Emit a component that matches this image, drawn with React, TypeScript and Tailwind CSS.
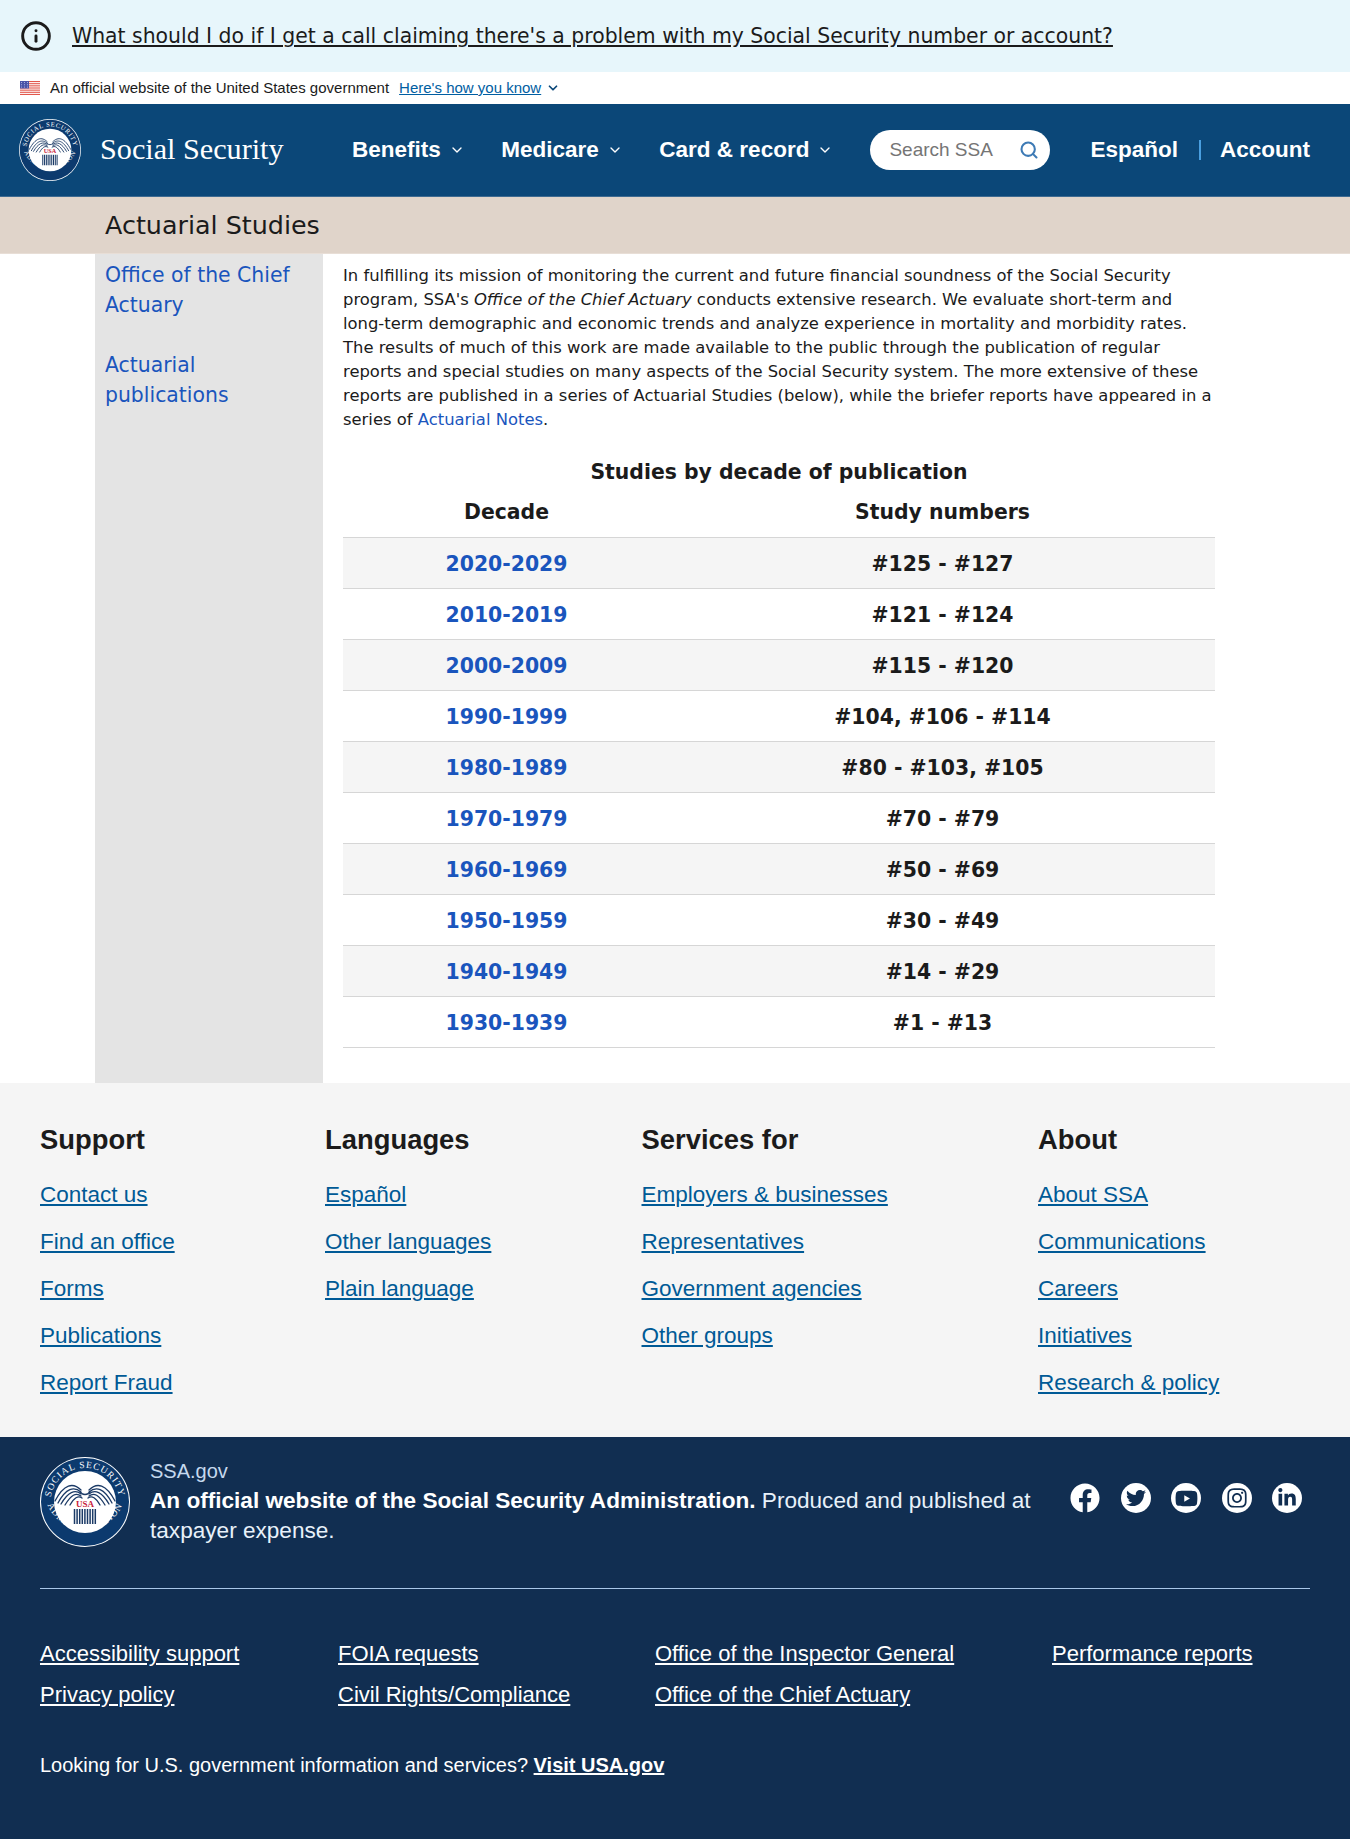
import { ChevronDown, Info, Search } from "lucide-react";
import { FaFacebook, FaInstagram, FaLinkedinIn, FaTwitter, FaYoutube } from "react-icons/fa";

const rows = [
  ["2020-2029", "#125 - #127"],
  ["2010-2019", "#121 - #124"],
  ["2000-2009", "#115 - #120"],
  ["1990-1999", "#104, #106 - #114"],
  ["1980-1989", "#80 - #103, #105"],
  ["1970-1979", "#70 - #79"],
  ["1960-1969", "#50 - #69"],
  ["1950-1959", "#30 - #49"],
  ["1940-1949", "#14 - #29"],
  ["1930-1939", "#1 - #13"],
];

const footerCols = [
  { title: "Support", links: ["Contact us", "Find an office", "Forms", "Publications", "Report Fraud"] },
  { title: "Languages", links: ["Español", "Other languages", "Plain language"] },
  { title: "Services for", links: ["Employers & businesses", "Representatives", "Government agencies", "Other groups"] },
  { title: "About", links: ["About SSA", "Communications", "Careers", "Initiatives", "Research & policy"] },
];

const legalCols = [
  ["Accessibility support", "Privacy policy"],
  ["FOIA requests", "Civil Rights/Compliance"],
  ["Office of the Inspector General", "Office of the Chief Actuary"],
  ["Performance reports"],
];

// feather strokes fan out from the shoulder of each wing
const feathers = [
  "M41 33 C33 25 24 27 15 44",
  "M41 35 C34 29 26 31 18 46",
  "M41 37 C35 32 28 35 21 47",
  "M41 39 C36 35 31 38 25 48",
  "M42 41 C38 38 34 41 30 48",
];

const Seal = ({ id }: { id: string }) => (
  <svg viewBox="0 0 90 90" className="w-full h-full">
    <circle cx="45" cy="45" r="45" fill="#fff" />
    <circle cx="45" cy="45" r="44" fill="#0c3a6e" />
    <circle cx="45" cy="45" r="31" fill="#fff" />
    <defs>
      <path id={`${id}-top`} d="M 11.6 54 A 34.5 34.5 0 1 1 78.4 54" />
      <path id={`${id}-bot`} d="M 4.5 38 A 41 41 0 0 0 85.5 38" />
    </defs>
    <text fill="#fff" fontSize="9.5" fontFamily="'Liberation Serif', serif" letterSpacing="1">
      <textPath href={`#${id}-top`} startOffset="50%" textAnchor="middle">SOCIAL SECURITY</textPath>
    </text>
    <text fill="#fff" fontSize="9.5" fontFamily="'Liberation Serif', serif" letterSpacing="1">
      <textPath href={`#${id}-bot`} startOffset="50%" textAnchor="middle">ADMINISTRATION</textPath>
    </text>
    <g fill="none" stroke="#1b3a66" strokeWidth="1.3" strokeLinecap="round">
      {feathers.map((d) => (
        <path key={d} d={d} />
      ))}
      <g transform="matrix(-1 0 0 1 90 0)">
        {feathers.map((d) => (
          <path key={d} d={d} />
        ))}
      </g>
      <path d="M40 35 Q45 40 50 35" />
    </g>
    <text x="45" y="50" textAnchor="middle" fontSize="9" fontWeight="bold" fill="#c8203a" fontFamily="'Liberation Serif', serif">USA</text>
    <g stroke="#1b3a66" strokeWidth="1.5">
      {[34.5, 37.1, 39.7, 42.3, 44.9, 47.5, 50.1, 52.7, 55.3].map((x) => (
        <line key={x} x1={x} x2={x} y1="52" y2="67" />
      ))}
    </g>
  </svg>
);

const Flag = () => (
  <svg viewBox="0 0 20 14" className="w-5 h-[14px]">
    <rect width="20" height="14" fill="#fff" />
    {[0, 2.15, 4.3, 6.45, 8.6, 10.75, 12.9].map((y) => (
      <rect key={y} y={y} width="20" height="1.1" fill="#e2574c" />
    ))}
    <rect width="9" height="7.5" fill="#4a55a8" />
    <g fill="#c9cdf0">
      {[1.5, 4.5, 7.5].map((x) =>
        [1.5, 3.75, 6].map((y) => <circle key={`${x}-${y}`} cx={x} cy={y} r="0.5" />)
      )}
    </g>
  </svg>
);

const SocialIcon = ({ children }: { children: React.ReactNode }) => (
  <span className="w-[30px] h-[30px] rounded-full bg-white text-[#112e51] flex items-center justify-center">
    {children}
  </span>
);

export default function App() {
  return (
    <div className="w-[1350px] h-[1839px] bg-white font-['DejaVu_Sans',sans-serif] text-[#1b1b1b] flex flex-col">
      <div className="h-[72px] bg-[#e7f6fb] flex items-center pl-[20px] gap-[20px]">
        <Info size={32} strokeWidth={2.2} className="text-[#1b1b1b]" />
        <a href="#" className="text-[20.4px] underline leading-[28px]">
          What should I do if I get a call claiming there's a problem with my Social Security number or account?
        </a>
      </div>

      <div className="h-[32px] flex items-center pl-[20px] font-['Liberation_Sans',sans-serif] text-[15px]">
        <Flag />
        <span className="ml-[10px]">An official website of the United States government</span>
        <a href="#" className="ml-[10px] text-[#005ea2] underline">Here's how you know</a>
        <ChevronDown size={14} strokeWidth={3} className="ml-[5px] text-[#0b4778]" />
      </div>

      <header className="h-[93px] bg-[#0b4778] flex items-center pl-[19px] pr-[40px] text-white font-['Liberation_Sans',sans-serif] border-b border-[#3d6a91]">
        <div className="w-[62px] h-[62px] shrink-0">
          <Seal id="head" />
        </div>
        <span className="ml-[19px] w-[252px] font-['Liberation_Serif',serif] text-[30.2px] leading-none -translate-y-px">Social Security</span>
        <nav className="flex items-center gap-[36.5px] text-[22.5px] font-bold">
          <span className="flex items-center gap-[8px]">Benefits <ChevronDown size={16} strokeWidth={2} /></span>
          <span className="flex items-center gap-[8px]">Medicare <ChevronDown size={16} strokeWidth={2} /></span>
          <span className="flex items-center gap-[8px]">Card &amp; record <ChevronDown size={16} strokeWidth={2} /></span>
        </nav>
        <div className="ml-[37px] w-[180px] h-[40px] rounded-full bg-white flex items-center pl-[19px] pr-[11px] justify-between">
          <span className="text-[#757575] text-[19px]">Search SSA</span>
          <Search size={20} strokeWidth={2.5} className="text-[#3d7ab5]" />
        </div>
        <div className="ml-auto flex items-center text-[22.5px] font-bold">
          <span>Español</span>
          <span className="ml-[21px] mr-[19px] w-[2px] h-[20px] bg-[#4a9fe0]" />
          <span>Account</span>
        </div>
      </header>

      <div className="h-[57px] bg-[#e0d4ca] flex items-center pl-[105px] border-b border-[#e8ded6]">
        <h1 className="text-[25.4px] text-[#1b1b1b]">Actuarial Studies</h1>
      </div>

      <main className="h-[829px] flex pl-[95px]">
        <aside className="w-[228px] bg-[#e4e4e4] pl-[10px] pr-[8px] text-[20.4px] leading-[30px] text-[#1a55bd] pt-[5.5px]">
          <a href="#" className="block">Office of the Chief Actuary</a>
          <a href="#" className="block mt-[30px]">Actuarial publications</a>
        </aside>
        <section className="w-[872px] ml-[20px] pt-[10px]">
          <p className="text-[16.4px] leading-[24px]">
            In fulfilling its mission of monitoring the current and future financial soundness of the Social Security program, SSA's <em>Office of the Chief Actuary</em> conducts extensive research. We evaluate short-term and long-term demographic and economic trends and analyze experience in mortality and morbidity rates. The results of much of this work are made available to the public through the publication of regular reports and special studies on many aspects of the Social Security system. The more extensive of these reports are published in a series of Actuarial Studies (below), while the briefer reports have appeared in a series of <a href="#" className="text-[#1a55bd]">Actuarial Notes</a>.
          </p>
          <table className="w-full mt-[26px] table-fixed text-[20.4px] font-bold">
            <caption className="h-[28px] leading-[28px] text-center">Studies by decade of publication</caption>
            <thead>
              <tr className="h-[51px] border-b border-[#d6d6d6]">
                <th className="w-[327px] font-bold pt-[3px]">Decade</th>
                <th className="font-bold pt-[3px]">Study numbers</th>
              </tr>
            </thead>
            <tbody>
              {rows.map(([decade, nums], i) => (
                <tr key={decade} className={`h-[51px] border-b border-[#d6d6d6] ${i % 2 === 0 ? "bg-[#f5f5f5]" : "bg-white"}`}>
                  <td className="text-center text-[#1a55bd] pt-[4px]"><a href="#">{decade}</a></td>
                  <td className="text-center pt-[4px]">{nums}</td>
                </tr>
              ))}
            </tbody>
          </table>
        </section>
      </main>

      <section className="h-[354px] bg-[#f5f5f5] px-[40px] pt-[39px] font-['Liberation_Sans',sans-serif] grid grid-cols-[285px_316.5px_396.5px_1fr]">
        {footerCols.map((col) => (
          <div key={col.title}>
            <h2 className="text-[27.4px] leading-[36px] font-bold text-[#1b1b1b]">{col.title}</h2>
            <ul className="mt-[23px] flex flex-col gap-[19px]">
              {col.links.map((l) => (
                <li key={l} className="text-[22.5px] leading-[28px] text-[#005a96] underline">{l}</li>
              ))}
            </ul>
          </div>
        ))}
      </section>

      <footer className="flex-1 bg-[#112e51] px-[40px] text-white font-['Liberation_Sans',sans-serif]">
        <div className="h-[152px] border-b border-[#a9c7e8] flex pt-[20px]">
          <div className="w-[90px] h-[90px] shrink-0">
            <Seal id="foot" />
          </div>
          <div className="ml-[20px] w-[890px] text-[22.6px] leading-[30.5px] text-[#e8f1fa]">
            <div className="text-[20px] leading-[28.5px] text-[#c5d9ee]">SSA.gov</div>
            <b className="text-white">An official website of the Social Security Administration.</b> Produced and published at taxpayer expense.
          </div>
          <div className="ml-auto mr-[8px] mt-[26px] flex gap-[20.5px] h-[30px]">
            <span className="w-[30px] h-[30px] flex items-center justify-center text-white"><FaFacebook size={30} /></span>
            <SocialIcon><FaTwitter size={20} /></SocialIcon>
            <SocialIcon><FaYoutube size={23} /></SocialIcon>
            <SocialIcon><FaInstagram size={22} /></SocialIcon>
            <SocialIcon><FaLinkedinIn size={20} /></SocialIcon>
          </div>
        </div>
        <div className="mt-[51px] grid grid-cols-[298px_317px_397px_1fr] text-[22px]">
          {legalCols.map((col, i) => (
            <div key={i} className="flex flex-col gap-[13px]">
              {col.map((l) => (
                <a key={l} href="#" className="leading-[28px] underline text-white">{l}</a>
              ))}
            </div>
          ))}
        </div>
        <p className="mt-[42px] text-[20px] leading-[28px]">
          Looking for U.S. government information and services? <a href="#" className="font-bold underline">Visit USA.gov</a>
        </p>
      </footer>
    </div>
  );
}
